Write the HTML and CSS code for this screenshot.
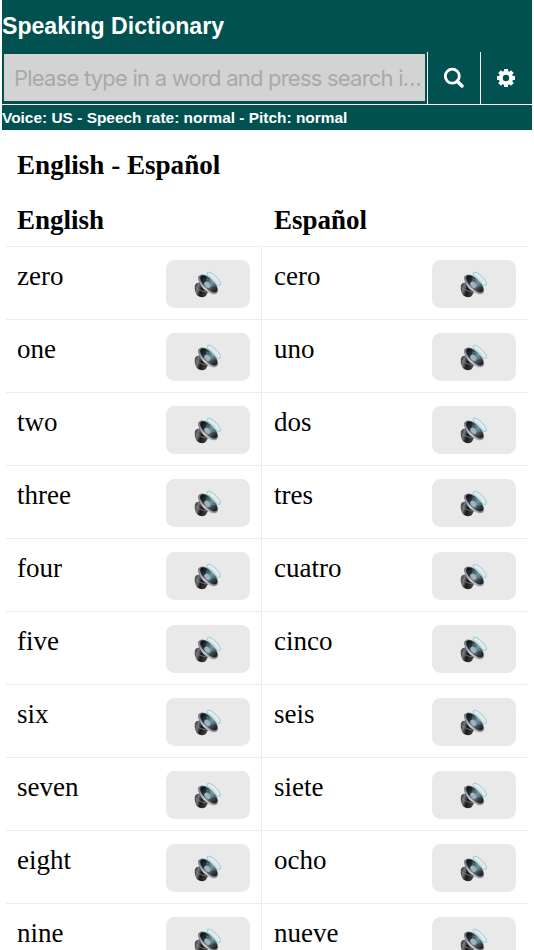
FILE: index.html
```
<!DOCTYPE html>
<html lang="en">
<head>
    <meta charset="UTF-8">
    <meta name="viewport" content="width=device-width, initial-scale=1.0">
    <title>Speaking Dictionary</title>
    <link rel="stylesheet" href="styles.css">
</head>
<body>
    <svg class="defs" aria-hidden="true">
        <defs>
            <linearGradient id="metal" x1="0" y1="0" x2="1" y2="0.3">
                <stop offset="0" stop-color="#222"/>
                <stop offset="0.3" stop-color="#777"/>
                <stop offset="0.55" stop-color="#181818"/>
                <stop offset="1" stop-color="#444"/>
            </linearGradient>
            <linearGradient id="rim" x1="0" y1="0" x2="1" y2="0">
                <stop offset="0" stop-color="#6d7078"/>
                <stop offset="0.5" stop-color="#c9cdd6"/>
                <stop offset="1" stop-color="#8c9098"/>
            </linearGradient>
            <linearGradient id="cone" x1="0" y1="0" x2="1" y2="0">
                <stop offset="0" stop-color="#0b0d0e"/>
                <stop offset="0.3" stop-color="#2c3337"/>
                <stop offset="0.55" stop-color="#7b8890"/>
                <stop offset="0.75" stop-color="#3e464b"/>
                <stop offset="1" stop-color="#15181a"/>
            </linearGradient>
            <symbol id="speaker" viewBox="0 0 36 36">
                <path d="M4.500 17.500 Q8 15.500 13 17 L19 25 L15.500 31.500 Q11 34.800 6 31 Q2.500 27 3.200 20z" fill="url(#metal)"/>
                <path d="M3.500 21 Q7 25.500 16.500 27" fill="none" stroke="#888" stroke-width="0.800"/>
                <path d="M7 9 Q7.500 18 11 22 Q18 28.500 27.500 28z" fill="#5d6168"/>
                <g transform="rotate(45 18.300 18.400)">
                    <ellipse cx="18.300" cy="18.400" rx="14" ry="7.200" fill="url(#rim)"/>
                    <ellipse cx="18.300" cy="17.600" rx="12.500" ry="5.700" fill="url(#cone)"/>
                    <ellipse cx="18" cy="19.500" rx="4" ry="2.800" fill="#a3b2c2"/>
                    <g fill="none" stroke="#5cc6d8">
                        <ellipse cx="18.300" cy="15.800" rx="5" ry="2.200" stroke-width="0.500" opacity="0.700"/>
                        <ellipse cx="18.300" cy="13" rx="7.200" ry="2.800" stroke-width="0.600" opacity="0.600"/>
                        <ellipse cx="18.300" cy="9.600" rx="10" ry="3.500" stroke-width="1" opacity="0.700"/>
                    </g>
                </g>
            </symbol>
        </defs>
    </svg>
    <header class="header">
        <h1>Speaking Dictionary</h1>
        <div class="search-bar">
            <input type="text" class="search-input" placeholder="Please type in a word and press search icon">
            <button class="bar-btn" aria-label="Search">
                <svg width="22" height="22" viewBox="0 0 22 22" fill="none" stroke="#fff">
                    <circle cx="9.300" cy="9.200" r="7" stroke-width="2.800"/>
                    <path d="M14.200 14.200L19 19" stroke-width="3.500" stroke-linecap="round"/>
                </svg>
            </button>
            <button class="bar-btn" aria-label="Settings">
                <svg width="20" height="20" viewBox="0 0 20 20" fill="none" stroke="#fff">
                    <circle cx="10" cy="10" r="5.200" stroke-width="4"/>
                    <g stroke-width="4">
                        <path d="M10 1V4.500M10 15.500V19M1 10H4.500M15.500 10H19"/>
                        <path d="M3.600 3.600L6.100 6.100M13.900 13.900L16.400 16.400M3.600 16.400L6.100 13.900M13.900 6.100L16.400 3.600"/>
                    </g>
                </svg>
            </button>
        </div>
        <p class="status">Voice: US - Speech rate: normal - Pitch: normal</p>
    </header>
    <main class="content">
        <h2>English - Español</h2>
        <div class="row head">
            <div class="cell">English</div>
            <div class="cell">Español</div>
        </div>
        <div class="row">
            <div class="cell"><span>zero</span><button class="speak"><svg><use href="#speaker"/></svg></button></div>
            <div class="cell"><span>cero</span><button class="speak"><svg><use href="#speaker"/></svg></button></div>
        </div>
        <div class="row">
            <div class="cell"><span>one</span><button class="speak"><svg><use href="#speaker"/></svg></button></div>
            <div class="cell"><span>uno</span><button class="speak"><svg><use href="#speaker"/></svg></button></div>
        </div>
        <div class="row">
            <div class="cell"><span>two</span><button class="speak"><svg><use href="#speaker"/></svg></button></div>
            <div class="cell"><span>dos</span><button class="speak"><svg><use href="#speaker"/></svg></button></div>
        </div>
        <div class="row">
            <div class="cell"><span>three</span><button class="speak"><svg><use href="#speaker"/></svg></button></div>
            <div class="cell"><span>tres</span><button class="speak"><svg><use href="#speaker"/></svg></button></div>
        </div>
        <div class="row">
            <div class="cell"><span>four</span><button class="speak"><svg><use href="#speaker"/></svg></button></div>
            <div class="cell"><span>cuatro</span><button class="speak"><svg><use href="#speaker"/></svg></button></div>
        </div>
        <div class="row">
            <div class="cell"><span>five</span><button class="speak"><svg><use href="#speaker"/></svg></button></div>
            <div class="cell"><span>cinco</span><button class="speak"><svg><use href="#speaker"/></svg></button></div>
        </div>
        <div class="row">
            <div class="cell"><span>six</span><button class="speak"><svg><use href="#speaker"/></svg></button></div>
            <div class="cell"><span>seis</span><button class="speak"><svg><use href="#speaker"/></svg></button></div>
        </div>
        <div class="row">
            <div class="cell"><span>seven</span><button class="speak"><svg><use href="#speaker"/></svg></button></div>
            <div class="cell"><span>siete</span><button class="speak"><svg><use href="#speaker"/></svg></button></div>
        </div>
        <div class="row">
            <div class="cell"><span>eight</span><button class="speak"><svg><use href="#speaker"/></svg></button></div>
            <div class="cell"><span>ocho</span><button class="speak"><svg><use href="#speaker"/></svg></button></div>
        </div>
        <div class="row">
            <div class="cell"><span>nine</span><button class="speak"><svg><use href="#speaker"/></svg></button></div>
            <div class="cell"><span>nueve</span><button class="speak"><svg><use href="#speaker"/></svg></button></div>
        </div>
    </main>
</body>
</html>
```
FILE: styles.css
```
* {
    box-sizing: border-box;
}
body {
    margin: 0;
    height: 950px;
    overflow: hidden;
    background: #fff;
    color: #000;
    font-family: "Liberation Serif", "Times New Roman", serif;
}
.defs {
    display: block;
    width: 0;
    height: 0;
}
.header {
    width: 530px;
    margin-left: 2px;
    background: #005150;
    color: #fff;
    font-family: "Liberation Sans", Arial, sans-serif;
}
.header h1 {
    margin: 0;
    height: 52px;
    line-height: 53px;
    font-size: 23.1px;
    white-space: nowrap;
}
.search-bar {
    display: flex;
    height: 53px;
    border-bottom: 1px solid #fff;
}
.search-input {
    width: 425px;
    height: 51px;
    padding: 0 0 0 10px;
    border: 2px solid #005150;
    border-radius: 0;
    background: #d3d3d3;
    font-family: Inter, sans-serif;
    font-size: 22px;
    letter-spacing: -0.78px;
    text-overflow: ellipsis;
}
.search-input::placeholder {
    color: #a9a9a9;
    text-overflow: ellipsis;
}
.bar-btn {
    display: flex;
    flex: 1;
    align-items: center;
    justify-content: center;
    padding: 0;
    border: 0;
    border-left: 1px solid #fff;
    background: #005150;
}
.status {
    margin: 0;
    height: 25px;
    line-height: 25px;
    font-size: 15.45px;
    font-weight: bold;
    white-space: nowrap;
}
.content {
    width: 521px;
    margin-left: 6px;
    font-size: 27px;
}
.content h2 {
    margin: 0;
    padding: 20px 0 0 11px;
    height: 63px;
    line-height: 31px;
    font-size: 27.1px;
}
.row {
    display: grid;
    grid-template-columns: 256px 264px;
    column-gap: 1px;
    height: 73px;
}
.cell {
    display: flex;
    justify-content: space-between;
    padding: 12px 11.5px 0 11px;
    line-height: 34px;
    border-bottom: 1px solid #ebebeb;
}
.cell:first-child {
    border-right: 1px solid #ebebeb;
}
.row.head {
    height: 54px;
    font-weight: bold;
}
.head .cell {
    padding-top: 10px;
}
.head .cell:first-child {
    border-right-color: transparent;
}
.speak {
    display: flex;
    align-items: center;
    justify-content: center;
    width: 84px;
    height: 48px;
    margin-top: 0.5px;
    padding: 0;
    border: 0;
    border-radius: 8.5px;
    background: #e9e9e9;
}
.speak svg {
    width: 32px;
    height: 32px;
}
```
